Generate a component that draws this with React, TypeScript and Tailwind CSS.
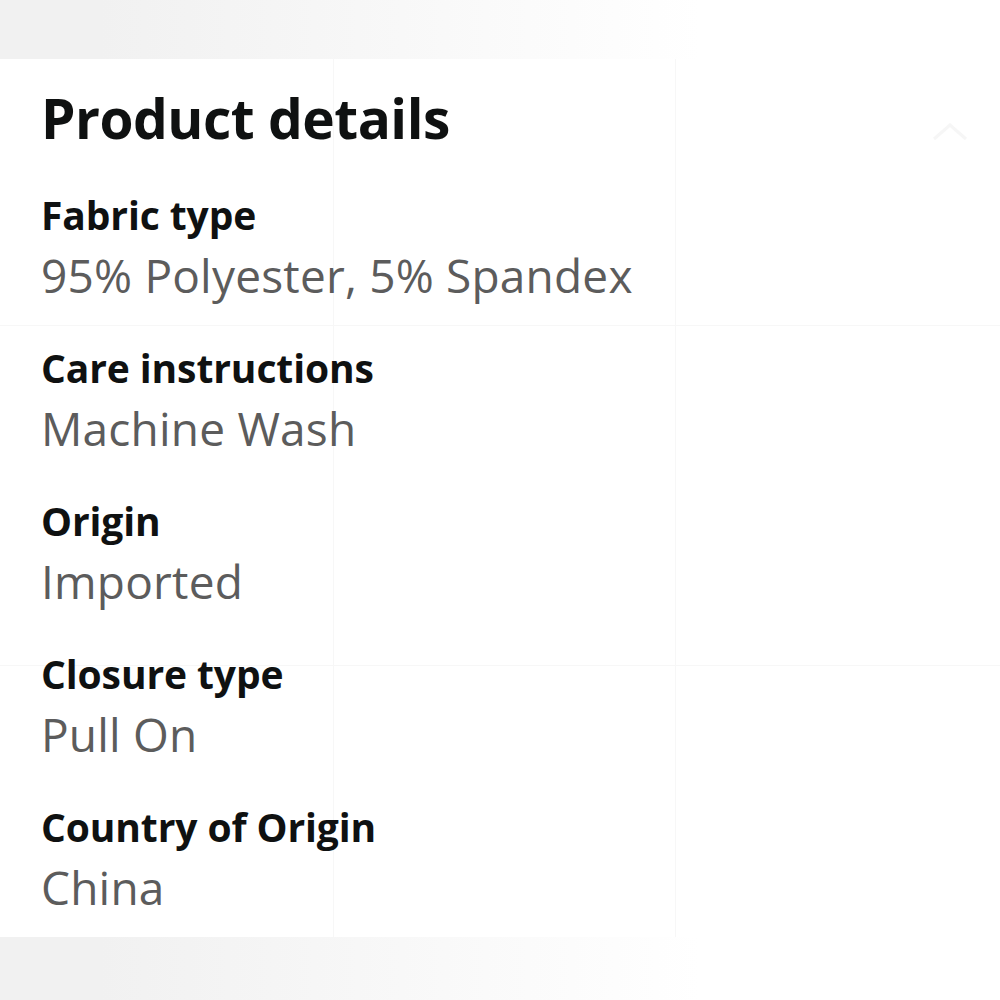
import React from 'react';

const details = [
  { label: 'Fabric type', value: '95% Polyester, 5% Spandex' },
  { label: 'Care instructions', value: 'Machine Wash' },
  { label: 'Origin', value: 'Imported' },
  { label: 'Closure type', value: 'Pull On' },
  { label: 'Country of Origin', value: 'China' },
];

const App: React.FC = () => {
  return (
    <div className="w-[1000px] h-[1000px] flex flex-col bg-white overflow-hidden" style={{ fontFamily: '"Open Sans", "Noto Sans", sans-serif' }}>
      <div className="h-[59px] shrink-0 bg-gradient-to-r from-[#f1f1f1] from-10% to-white to-70%" />

      <div className="relative h-[878px] shrink-0 bg-white overflow-hidden">
        {/* faint editor grid lines */}
        <div className="absolute left-[333px] top-0 bottom-0 w-px bg-[#f7f7f7]" />
        <div className="absolute left-[675px] top-0 bottom-0 w-px bg-[#f7f7f7]" />
        <div className="absolute left-0 right-0 top-[266px] h-px bg-[#f7f7f7]" />
        <div className="absolute left-0 right-0 top-[606px] h-px bg-[#f7f7f7]" />
        <svg className="absolute left-[930px] top-[60px]" width="40" height="24" viewBox="0 0 40 24" fill="none">
          <path d="M4 20 L20 6 L36 20" stroke="#f6f6f6" strokeWidth="3" />
        </svg>

        <div className="relative flex flex-col pl-[41px] pt-[29px]">
          <h1 className="text-[55px] leading-[60px] font-bold text-[#0f1111] tracking-[-0.5px]">Product details</h1>
          <div className="flex flex-col mt-[36px] gap-[31px]">
            {details.map((d) => (
              <div key={d.label} className="flex flex-col">
                <div className="text-[39px] leading-[61px] font-bold text-[#0f1111] tracking-[-0.1px]">{d.label}</div>
                <div className="text-[46px] leading-[61px] text-[#5c5c5c] tracking-[0.2px]">{d.value}</div>
              </div>
            ))}
          </div>
        </div>
      </div>

      <div className="flex-1 bg-gradient-to-r from-[#f1f1f1] from-10% to-white to-70%" />
    </div>
  );
};

export default App;
